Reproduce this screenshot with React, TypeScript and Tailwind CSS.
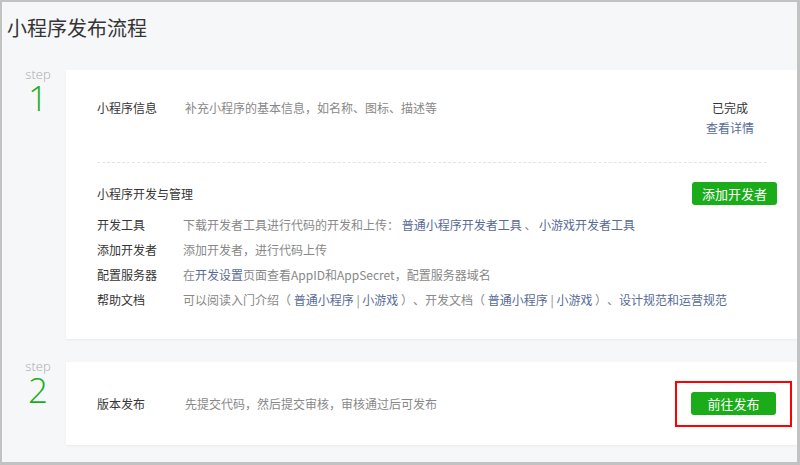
const font = { fontFamily: '"Noto Sans CJK SC", "Noto Sans", sans-serif' };

const Link = ({ children }: { children: React.ReactNode }) => (
  <span className="text-[#576b95]">{children}</span>
);

const StepLabel = ({ n }: { n: number }) => (
  <div className="w-[64px] shrink-0 pl-[8px] flex flex-col items-center">
    <div className="text-[13px] leading-[13px] text-[#aaa] -mt-[2px]" style={{ fontFamily: '"Open Sans", sans-serif', fontWeight: 300 }}>step</div>
    <div className="text-[35px] leading-[36px] text-[#1aad19] -mt-[1px]" style={{ fontFamily: '"Open Sans", sans-serif', fontWeight: 300 }}>{n}</div>
  </div>
);

const rows: { label: string; content: React.ReactNode }[] = [
  {
    label: '开发工具',
    content: (
      <>
        下载开发者工具进行代码的开发和上传： <Link>普通小程序开发者工具</Link> 、 <Link>小游戏开发者工具</Link>
      </>
    ),
  },
  { label: '添加开发者', content: '添加开发者，进行代码上传' },
  {
    label: '配置服务器',
    content: (
      <>
        在<Link>开发设置</Link>页面查看AppID和AppSecret，配置服务器域名
      </>
    ),
  },
  {
    label: '帮助文档',
    content: (
      <>
        可以阅读入门介绍（ <Link>普通小程序</Link> | <Link>小游戏</Link> ）、开发文档（ <Link>普通小程序</Link> | <Link>小游戏</Link> ）、<Link>设计规范和运营规范</Link>
      </>
    ),
  },
];

export default function App() {
  return (
    <div
      className="w-[800px] h-[465px] bg-[#f6f7f9] border-t-2 border-l-2 border-r-[3px] border-b-[3px] border-[#c2c2c2] overflow-hidden text-[12px] text-[#353535] [text-spacing-trim:space-all]"
      style={font}
    >
      <h1 className="text-[20px] leading-[28px] pl-[5px] pt-[12px] text-[#353535]">小程序发布流程</h1>

      <div className="flex mt-[28px]">
        <StepLabel n={1} />
        <div className="flex-1 bg-white h-[269px] shadow-[0_1px_2px_rgba(0,0,0,0.06)] pl-[31px] pr-[20px]">
          <div className="flex items-start pt-[28px] pr-[17px]">
            <div className="w-[88px] leading-[20px]">小程序信息</div>
            <div className="flex-1 leading-[20px] text-[#888]">补充小程序的基本信息，如名称、图标、描述等</div>
            <div className="w-[60px] text-center leading-[20px]">
              <div>已完成</div>
              <div className="text-[#576b95]">查看详情</div>
            </div>
          </div>
          <div className="mt-[24px] mr-[10px] border-t border-dashed border-[#e4e4e4]" />
          <div className="flex items-center justify-between mt-[19px]">
            <div className="leading-[20px]">小程序开发与管理</div>
            <div className="w-[85px] h-[23px] bg-[#1aad19] rounded-[3px] text-white text-[13px] flex items-center justify-center">添加开发者</div>
          </div>
          <div className="mt-[7px] flex flex-col">
            {rows.map((r) => (
              <div key={r.label} className="flex h-[25px] items-center">
                <div className="w-[86px]">{r.label}</div>
                <div className="flex-1 text-[#888]">{r.content}</div>
              </div>
            ))}
          </div>
        </div>
      </div>

      <div className="flex mt-[23px]">
        <StepLabel n={2} />
        <div className="flex-1 bg-white h-[83px] shadow-[0_1px_2px_rgba(0,0,0,0.06)] pl-[31px] pr-[5px] flex items-center">
          <div className="w-[88px]">版本发布</div>
          <div className="flex-1 text-[#888]">先提交代码，然后提交审核，审核通过后可发布</div>
          <div className="w-[117px] h-[46px] border-2 border-[#ff0000] flex items-center justify-center">
            <div className="w-[85px] h-[23px] bg-[#1aad19] rounded-[3px] text-white text-[13px] flex items-center justify-center">前往发布</div>
          </div>
        </div>
      </div>
    </div>
  );
}
